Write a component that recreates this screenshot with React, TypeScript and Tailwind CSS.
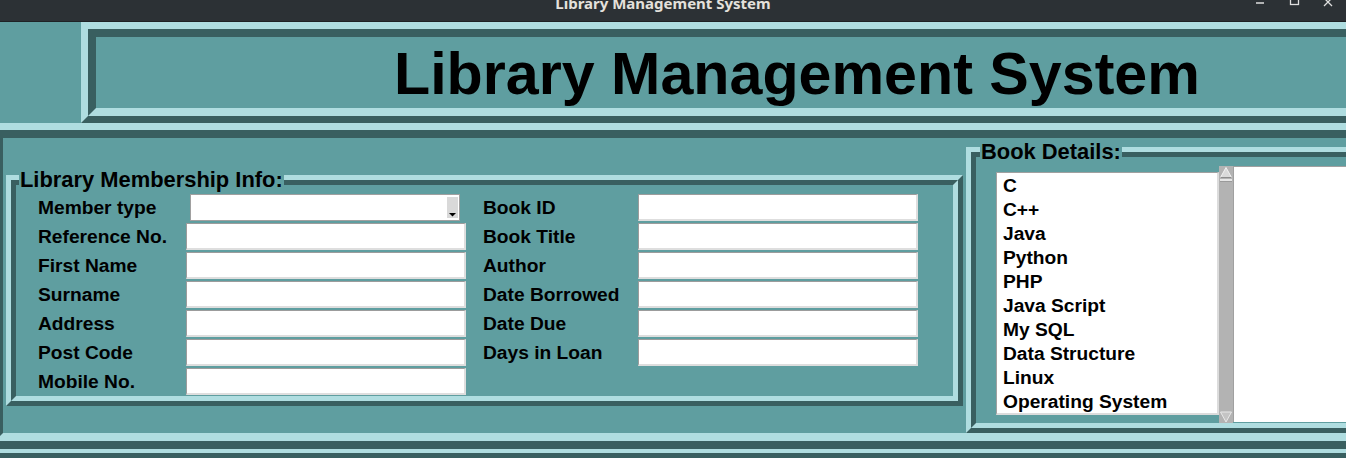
import React from 'react';

const leftFields = ['Member type', 'Reference No.', 'First Name', 'Surname', 'Address', 'Post Code', 'Mobile No.'];
const rightFields = ['Book ID', 'Book Title', 'Author', 'Date Borrowed', 'Date Due', 'Days in Loan'];
const books = ['C', 'C++', 'Java', 'Python', 'PHP', 'Java Script', 'My SQL', 'Data Structure', 'Linux', 'Operating System'];

const labelCls = 'flex h-[29px] items-center whitespace-nowrap text-[19.2px] font-bold leading-none text-black';
const entryCls =
  'h-[27px] w-[280px] bg-white border-t border-l border-b-2 border-r-2 border-t-[#9c9c9c] border-l-[#9c9c9c] border-b-[#dedede] border-r-[#dedede]';

const Combo: React.FC = () => (
  <div className="ml-[4px] flex h-[27px] w-[270px] justify-end border border-[#a0a0a0] bg-white py-[2px] pr-[1px]">
    <div className="w-[11px] bg-[#d9d9d9]">
      <svg width="11" height="21" viewBox="0 0 11 21">
        <polygon points="2,16 9,16 5.5,19.5" fill="#000" />
      </svg>
    </div>
  </div>
);

const Scrollbar: React.FC = () => (
  <svg width="14" height="257" viewBox="0 0 14 257" className="mt-[9px] shrink-0">
    <rect width="14" height="257" fill="#b3b3b3" />
    <polygon points="7,1.5 12.5,11.5 1.5,11.5" fill="#d9d9d9" stroke="#f2f2f2" strokeWidth="1" />
    <line x1="12.5" y1="11.5" x2="1.5" y2="11.5" stroke="#8c8c8c" />
    <rect x="1" y="13" width="12" height="2" fill="#e6e6e6" />
    <line x1="1" y1="15.5" x2="13" y2="15.5" stroke="#9a9a9a" />
    <polygon points="1.5,246 12.5,246 7,256" fill="#c4c4c4" stroke="#e8e8e8" strokeWidth="1" />
  </svg>
);

export default function App() {
  return (
    <div className="h-[458px] w-[1346px] overflow-hidden bg-[#5f9ea0] font-['Liberation_Sans',Arial,sans-serif]">
      {/* window title bar */}
      <div className="flex h-[22px] items-start overflow-hidden border-b border-[#1e2225] bg-[#2c3135]">
        <div className="flex-1" />
        <div className="-mt-[4px] mr-[20px] whitespace-nowrap font-['Noto_Sans',sans-serif] text-[15px] font-bold leading-[15px] text-[#e4e1dc]">
          Library Management System
        </div>
        <div className="flex flex-1 justify-end">
          <svg width="100" height="21" viewBox="0 0 100 21">
            <line x1="10" y1="3" x2="18" y2="3" stroke="#dedede" strokeWidth="1.5" />
            <rect x="44.5" y="-4" width="8" height="8.5" fill="none" stroke="#dedede" strokeWidth="1.3" />
            <line x1="78" y1="-2" x2="86" y2="6" stroke="#dedede" strokeWidth="1.3" />
            <line x1="86" y1="-2" x2="78" y2="6" stroke="#dedede" strokeWidth="1.3" />
          </svg>
        </div>
      </div>

      {/* header */}
      <div className="flex h-[101px]">
        <div className="w-[81px] shrink-0" />
        <div className="-mr-[60px] flex-1 border-[7px] border-t-[#afdde0] border-l-[#afdde0] border-b-[#395f60] border-r-[#395f60]">
          <div className="flex h-full items-center border-[8px] border-t-[#395f60] border-l-[#395f60] border-b-[#afdde0] border-r-[#afdde0] pl-[298px] pt-[2px]">
            <h1 className="whitespace-nowrap text-[59.2px] font-bold leading-none text-black">Library Management System</h1>
          </div>
        </div>
      </div>

      {/* body */}
      <div className="-ml-[12px] -mr-[60px] h-[326px] border-[7px] border-b-[8px] border-t-[#afdde0] border-l-[#afdde0] border-b-[#395f60] border-r-[#395f60]">
        <div className="flex h-full items-start border-[8px] border-t-[#395f60] border-l-[#395f60] border-b-[#afdde0] border-r-[#afdde0]">
          {/* membership info */}
          <div className="relative ml-[3px] mt-[37px] h-[231px] w-[957px] shrink-0 border-[5px] border-t-[#afdde0] border-l-[#afdde0] border-b-[#395f60] border-r-[#395f60]">
            <div className="h-full border-[5px] border-t-[#395f60] border-l-[#395f60] border-b-[#afdde0] border-r-[#afdde0] pl-[22px] pt-[8px]">
              <div className="grid grid-cols-[148px_280px_172px_280px]">
                {leftFields.map((f, i) => (
                  <React.Fragment key={f}>
                    <div className={labelCls}>{f}</div>
                    <div className="flex h-[29px] items-center">{i === 0 ? <Combo /> : <div className={entryCls} />}</div>
                    <div className={labelCls + ' pl-[17px]'}>{rightFields[i] ?? ''}</div>
                    <div className="flex h-[29px] items-center">{rightFields[i] ? <div className={entryCls} /> : null}</div>
                  </React.Fragment>
                ))}
              </div>
            </div>
            <div className="absolute left-[8px] top-[-12px] whitespace-nowrap bg-[#5f9ea0] px-[1px] text-[21.9px] font-bold leading-[24px] text-black">
              Library Membership Info:
            </div>
          </div>

          {/* book details */}
          <div className="relative ml-[3px] mt-[9px] h-[286px] flex-1 border-[5px] border-t-[#afdde0] border-l-[#afdde0] border-b-[#395f60] border-r-[#395f60]">
            <div className="flex h-full items-start border-[5px] border-t-[#395f60] border-l-[#395f60] border-b-[#afdde0] border-r-[#afdde0]">
              <div className="ml-[20px] mt-[15px] h-[243px] w-[223px] shrink-0 border-t border-l border-b-2 border-r-2 border-t-[#a0a0a0] border-l-[#a0a0a0] border-b-[#dcdcdc] border-r-[#dcdcdc] bg-white pl-[6px] pt-[1px]">
                {books.map((b) => (
                  <div key={b} className="h-[24px] whitespace-nowrap text-[19.2px] font-bold leading-[24px] text-black">
                    {b}
                  </div>
                ))}
              </div>
              <Scrollbar />
              <div className="mt-[9px] h-[256px] flex-1 border-t border-l border-[#a0a0a0] bg-white" />
            </div>
            <div className="absolute left-[9px] top-[-12px] whitespace-nowrap bg-[#5f9ea0] px-[1px] text-[21.9px] font-bold leading-[24px] text-black">
              Book Details:
            </div>
          </div>
        </div>
      </div>

      {/* next frame edge */}
      <div className="h-[9px] border-t-[4px] border-[#afdde0] bg-[#395f60]" />
    </div>
  );
}
